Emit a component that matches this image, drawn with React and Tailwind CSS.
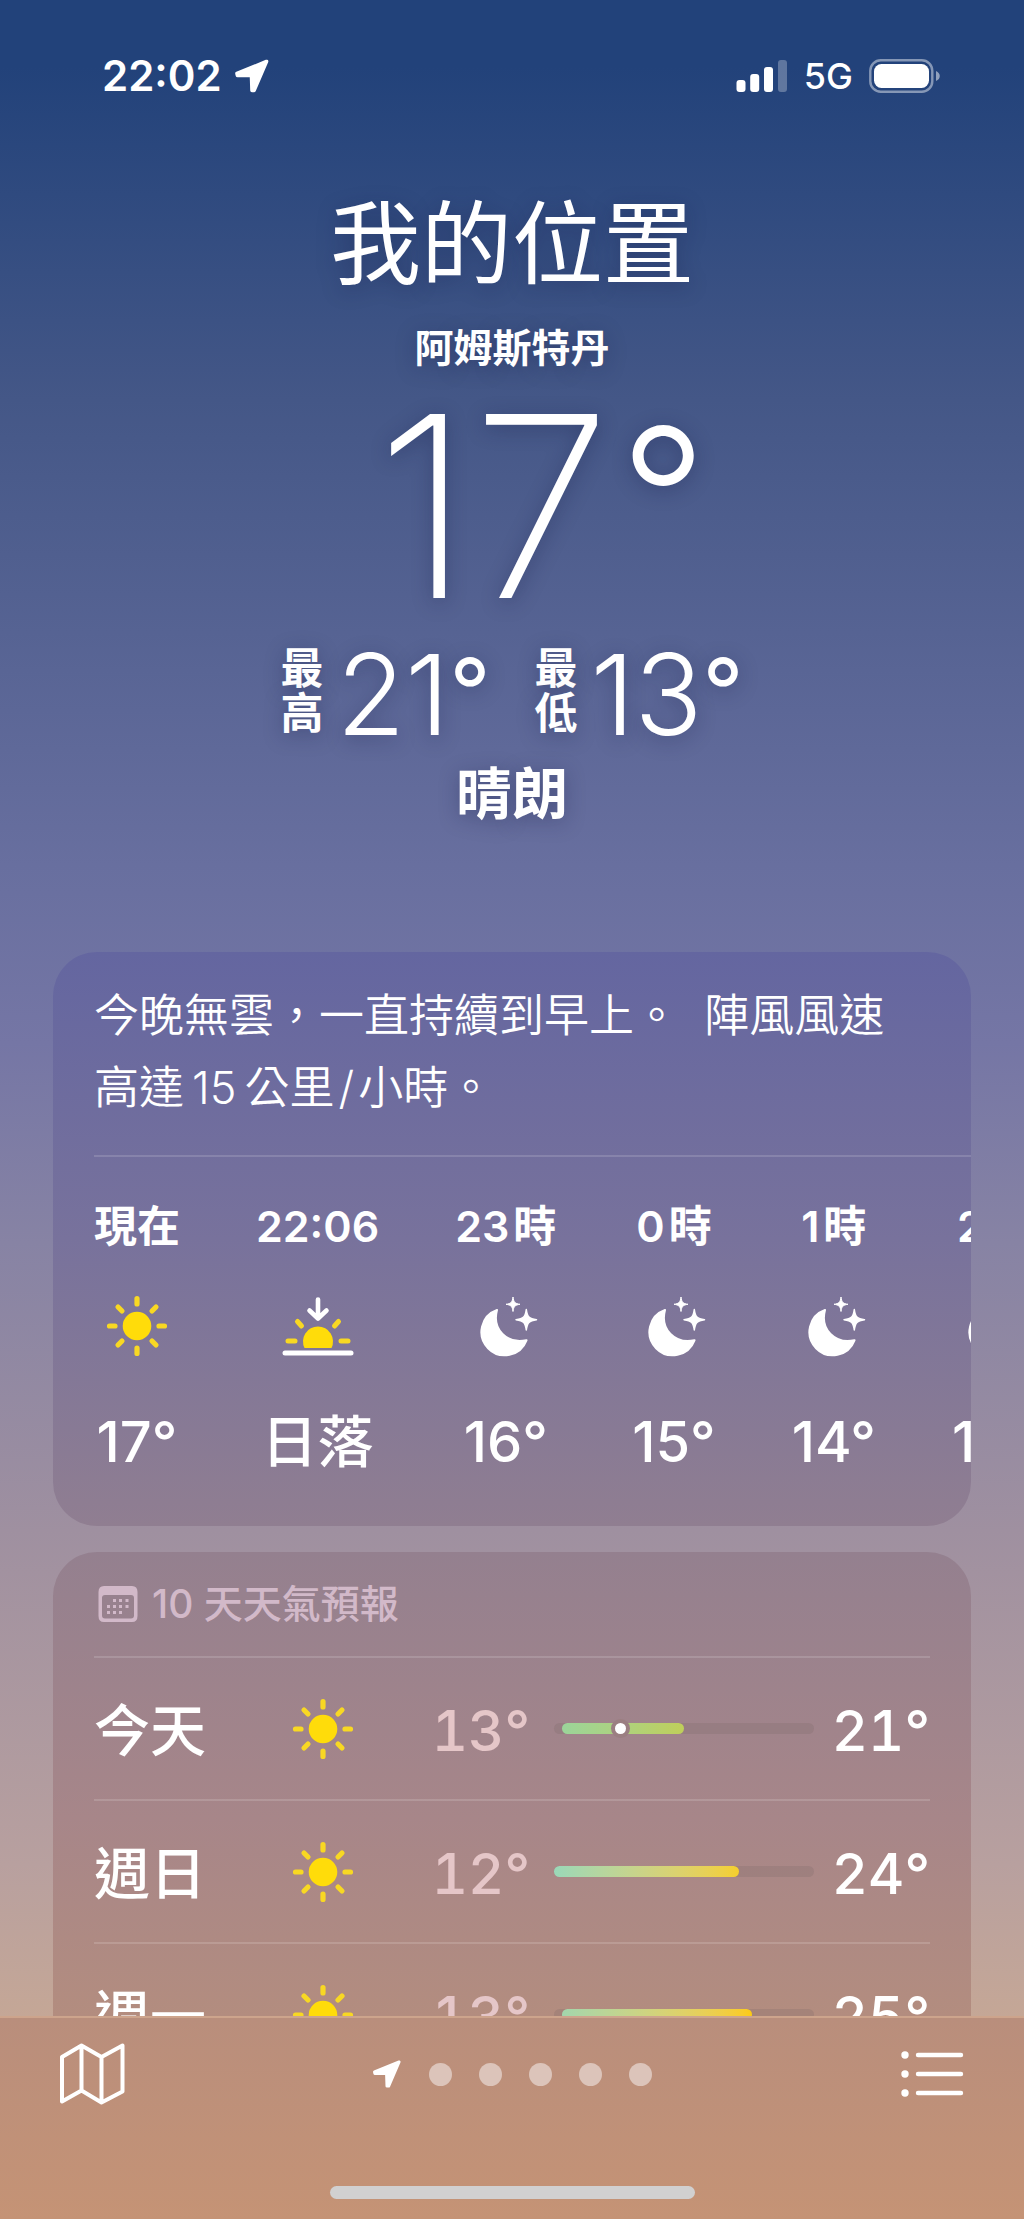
const HOURS = [
  { time: "現在", kind: "sun", value: "17°" },
  { time: "22:06", kind: "sunset", value: "日落" },
  { hour: "23", kind: "moon", value: "16°" },
  { hour: "0", kind: "moon", value: "15°" },
  { hour: "1", kind: "moon", value: "14°" },
  { hour: "2", kind: "moon", value: "14°" },
];

// from / to / now are percentages of the ten day temperature range
const DAYS = [
  { day: "今天", low: 13, high: 21, from: 3, to: 50, now: 25, fill: "from-[#9bd49a] to-[#bfcf5a]" },
  { day: "週日", low: 12, high: 24, from: 0, to: 71, fill: "from-[#9ad8b8] via-[#cdd384] to-[#f5cf2c]" },
  { day: "週一", low: 13, high: 25, from: 3, to: 76, fill: "from-[#a3d6ac] via-[#d3d37a] to-[#fccb12]" },
];

const PAGES = ["台北", "東京", "倫敦", "巴黎", "柏林"];

function SunIcon() {
  return (
    <svg viewBox="0 0 64 64" className="w-16 h-16 shrink-0" aria-hidden="true">
      <circle cx="32" cy="32" r="14.3" fill="#ffdc0a" />
      <path
        d="M32 4.500v5.500M32 54v5.500M4.500 32h5.500M54 32h5.500M13 13l4 4M47 47l4 4M13 51l4-4M47 17l4-4"
        stroke="#f8d823" strokeWidth="5.200" strokeLinecap="round"
      />
    </svg>
  );
}

function SunsetIcon() {
  return (
    <svg viewBox="0 0 72 64" className="w-[72px] h-16 shrink-0" aria-hidden="true">
      <path d="M22.500 54A15 15 0 1 1 49.500 54Z" fill="#ffdc0a" />
      <path d="M6 47h7M59 47h7M15.500 27.500l4 4.500M56.500 27.500l-4 4.500" stroke="#f8d823" strokeWidth="5" strokeLinecap="round" />
      <path d="M36 5.500V23M27.500 16.500L36 24.500L44.500 16.500" fill="none" stroke="#fff" strokeWidth="4.600" strokeLinecap="round" strokeLinejoin="round" />
      <path d="M3 59h66" stroke="#fff" strokeWidth="5" strokeLinecap="round" />
    </svg>
  );
}

function MoonIcon() {
  return (
    <svg viewBox="0 0 64 64" className="w-16 h-16 shrink-0" fill="#fff" aria-hidden="true">
      <path
        d="M23 16A23.300 23.300 0 1 0 52.500 46.300C43.500 48.300 34.500 46 28.500 40C22.500 34 20.500 25.500 23 16Z"
        stroke="#fff" strokeWidth="2" strokeLinejoin="round"
      />
      <path d="M39 3C39.700 8.300 41 9.600 46 10.300C41 11 39.700 12.300 39 17.500C38.300 12.300 37 11 32 10.300C37 9.600 38.300 8.300 39 3Z" stroke="#fff" strokeWidth="1" strokeLinejoin="round" />
      <path
        d="M52.300 15.500C53.300 23 55 24.700 62.500 25.700C55 26.700 53.300 28.400 52.300 36C51.300 28.400 49.600 26.700 42 25.700C49.600 24.700 51.300 23 52.300 15.500Z"
        stroke="#fff" strokeWidth="1.500" strokeLinejoin="round"
      />
    </svg>
  );
}

const ICONS = { sun: SunIcon, sunset: SunsetIcon, moon: MoonIcon };

function LocationArrow({ className }) {
  return (
    <svg viewBox="0 0 36 36" className={className} aria-hidden="true">
      <path d="M32.500 3.500L3 15.500L3.500 17.500H17.500L18 32.500H20Z" fill="#fff" stroke="#fff" strokeWidth="3.600" strokeLinejoin="round" />
    </svg>
  );
}

function StatusBar() {
  return (
    <div className="flex items-center justify-between h-14 pl-[102px] pr-[83px]">
      <div className="flex items-center gap-3">
        <span className="text-[42px] leading-[56px] font-semibold">22:02</span>
        <LocationArrow className="w-9 h-9" />
      </div>
      <div className="flex items-center gap-4">
        <svg viewBox="0 0 52 32" className="w-[52px] h-8" fill="#fff" aria-hidden="true">
          <rect x="0.500" y="20" width="9" height="12" rx="3" />
          <rect x="14.200" y="14" width="9" height="18" rx="3" />
          <rect x="28" y="7" width="9" height="25" rx="3" />
          <rect x="42" y="0" width="9" height="32" rx="3" opacity="0.280" />
        </svg>
        <span className="text-4xl leading-[56px] font-medium">5G</span>
        <svg viewBox="0 0 72 34" className="w-[72px] h-[34px]" aria-hidden="true">
          <rect x="1.300" y="1.300" width="62" height="31.400" rx="10.500" fill="none" stroke="#fff" strokeOpacity="0.450" strokeWidth="2.400" />
          <rect x="5" y="5" width="55" height="24" rx="7.500" fill="#fff" />
          <path d="M67 12C72 14 72 20 67 22Z" fill="#fff" opacity="0.500" />
        </svg>
      </div>
    </div>
  );
}

function Extreme({ label, value }) {
  return (
    <div className="flex items-start">
      <span className="w-11 mr-3 text-[43px] leading-[45px] font-semibold break-all">{label}</span>
      <span className="text-[112px] leading-[96px] font-light">{value}</span>
      <span className="text-[90px] leading-[90px] font-normal">°</span>
    </div>
  );
}

function Summary() {
  return (
    <header className="flex flex-col items-center mt-[86px] [text-shadow:0_4px_20px_rgba(20,25,70,0.35)]">
      <h1 className="text-[91px] leading-[108px] font-normal">我的位置</h1>
      <p className="mt-6 text-[39px] leading-[52px] font-semibold">阿姆斯特丹</p>
      <p className="flex items-start mt-3 pl-[58px]">
        <span className="text-[253px] leading-[240px] font-extralight">17</span>
        <span className="ml-2 text-[192px] leading-[220px] font-light">°</span>
      </p>
      <div className="flex gap-11 mt-5">
        <Extreme label="最高" value={21} />
        <Extreme label="最低" value={13} />
      </div>
      <p className="mt-5 text-[56px] leading-[64px] font-semibold">晴朗</p>
    </header>
  );
}

function HourlyCard() {
  return (
    <section className="mt-[126px] pt-7 pb-[52px] pl-[41px] rounded-[44px] overflow-hidden bg-linear-to-b from-[#6466a0] via-[#78729c] to-[#907e91]">
      <p className="pr-16 text-[45px] leading-[72px] font-[350]">
        今晚無雲，一直持續到早上。&nbsp; 陣風風速高達<span className="mx-2">15</span>公里<span className="mx-1">/</span>小時。
      </p>
      <div className="mt-[31px] pt-[45px] border-t-2 border-white/15">
        <ul className="flex gap-[76px]">
          {HOURS.map(h => {
            const Icon = ICONS[h.kind];
            return (
              <li key={h.time ?? h.hour} className="flex flex-col items-center shrink-0">
                <span className="flex gap-1 text-[43px] leading-[48px] font-semibold">
                  {h.time ?? <><span>{h.hour}</span><span>時</span></>}
                </span>
                <div className="mt-11"><Icon /></div>
                <span className="mt-[52px] text-[56px] leading-[64px] font-medium">{h.value}</span>
              </li>
            );
          })}
        </ul>
      </div>
    </section>
  );
}

function RangeBar({ from, to, now, fill }) {
  return (
    <div className="relative flex-1 h-[11px] mx-6 rounded-full bg-[#7d6666]/25">
      <div
        className={`absolute inset-y-0 rounded-full bg-linear-to-r ${fill}`}
        style={{ left: `${from}%`, width: `${to - from}%` }}
      />
      {now !== undefined && (
        <div
          className="absolute inset-y-0 w-[11px] -ml-1 rounded-full bg-white ring-4 ring-[#9b7f82]"
          style={{ left: `${now}%` }}
        />
      )}
    </div>
  );
}

function ForecastCard() {
  return (
    <section className="mt-[26px] px-[41px] pt-7 rounded-t-[44px] bg-linear-to-b from-[#94808f] via-[#a78689] to-[#b78f7b]">
      <h2 className="flex items-center gap-[14px] pl-1 pb-7 text-[39px] leading-[48px] font-medium text-[#d2b9c9]">
        <svg viewBox="0 0 40 36" className="w-10 h-9" fill="currentColor" aria-hidden="true">
          <path fillRule="evenodd" d="M6 0H34Q39.500 0 39.500 6V30Q39.500 36 34 36H6Q0.500 36 0.500 30V6Q0.500 0 6 0ZM7 9Q4 9 4 12V29.500Q4 32.500 7 32.500H33Q36 32.500 36 29.500V12Q36 9 33 9Z" />
          <path d="M15 13h3v3h-3zM21 13h3v3h-3zM27.500 13h3v3h-3zM9 19h3v3h-3zM15 19h3v3h-3zM21 19h3v3h-3zM27.500 19h3v3h-3zM9 25h3v3h-3zM15 25h3v3h-3zM21 25h3v3h-3z" />
        </svg>
        10 天天氣預報
      </h2>
      <ul>
        {DAYS.map(d => (
          <li key={d.day} className="flex items-center h-[143px] border-t-2 border-white/15 text-[56px] leading-[64px] font-medium">
            <span className="w-[197px] pt-1">{d.day}</span>
            <SunIcon />
            <span className="w-[175px] pt-1 text-right text-[#e5c6c8]"><span className="tabular-nums">{d.low}</span>°</span>
            <RangeBar from={d.from} to={d.to} now={d.now} fill={d.fill} />
            <span className="flex justify-end w-[92px] pt-1"><span className="tabular-nums">{d.high}</span>°</span>
          </li>
        ))}
      </ul>
    </section>
  );
}

function TabBar() {
  return (
    <nav className="shrink-0 border-t-2 border-[#cda48c] bg-linear-to-b from-[#b98e7c] to-[#c59375]">
      <div className="flex items-center justify-between px-[58px] pt-6">
        <button type="button" aria-label="地圖" className="cursor-pointer">
          <svg viewBox="0 0 68 64" className="w-[68px] h-16" fill="none" stroke="#fff" strokeWidth="4" strokeLinejoin="round" aria-hidden="true">
            <path d="M4 15L23.500 3.500L43.500 15L64.500 3.500V49.500L43.500 60.500L23.500 48.500L4 59.500ZM23.500 3.500V48.500M43.500 15V60.500" />
          </svg>
        </button>
        <div className="flex items-center gap-[27px]">
          <button type="button" aria-label="我的位置" className="cursor-pointer">
            <LocationArrow className="w-[30px] h-[30px]" />
          </button>
          {PAGES.map(p => (
            <button key={p} type="button" aria-label={p} className="w-[23px] h-[23px] rounded-full bg-[#dcc4ba] cursor-pointer" />
          ))}
        </div>
        <button type="button" aria-label="列表" className="cursor-pointer">
          <svg viewBox="0 0 68 64" className="w-[68px] h-16" fill="#fff" aria-hidden="true">
            <circle cx="7" cy="13" r="3.700" />
            <circle cx="7" cy="32" r="3.700" />
            <circle cx="7" cy="51" r="3.700" />
            <path d="M20 13h43M20 32h43M20 51h43" stroke="#fff" strokeWidth="4.400" strokeLinecap="round" />
          </svg>
        </button>
      </div>
      <div className="w-[365px] h-[13px] mt-20 mb-5 mx-auto rounded-full bg-[#d1d0d0]" />
    </nav>
  );
}

export default function App() {
  return (
    <div
      lang="zh-Hant"
      className="flex flex-col h-screen overflow-hidden text-white font-['Inter','Noto_Sans_CJK_TC',sans-serif] bg-[linear-gradient(#22427a_3%,#445787_18%,#686f9f_39%,#7576a5_47%,#8783a4_56%,#9f90a0_69%,#b8a09f_84%,#c5a796_91%)]"
    >
      <main className="flex-1 min-h-0 overflow-y-auto [scrollbar-width:none] pt-12">
        <StatusBar />
        <Summary />
        <div className="px-[53px]">
          <HourlyCard />
          <ForecastCard />
        </div>
      </main>
      <TabBar />
    </div>
  );
}
